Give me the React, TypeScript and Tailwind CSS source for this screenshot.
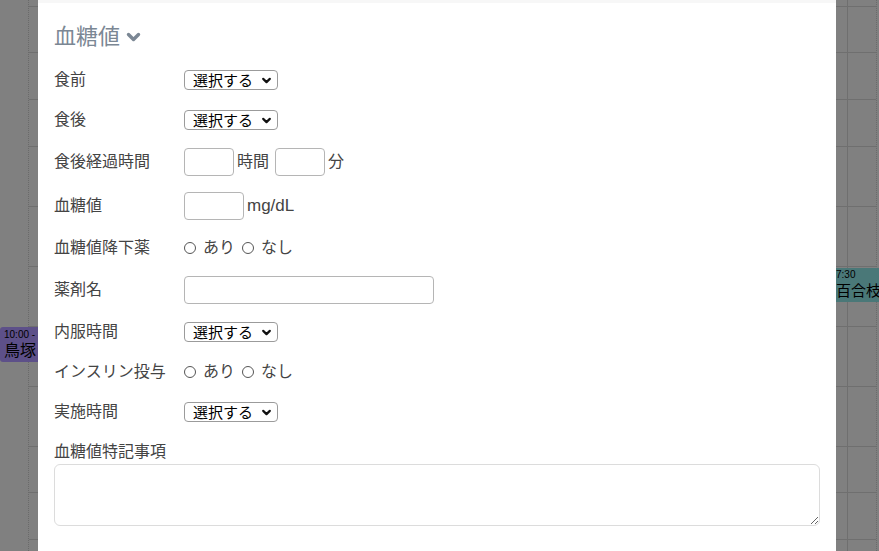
const rowLines = [7, 46, 47, 47, 60, 60, 60, 60, 60, 46, 47];

function SelectBox() {
  return (
    <div className="flex items-center justify-between w-[94px] h-[20px] border border-[#9b9b9b] rounded-[4px] bg-white pl-[8px] pr-[5px] text-[15px] text-black leading-none">
      <span>選択する</span>
      <svg className="w-[11px] h-[11px]" viewBox="0 0 10 10" fill="none" stroke="#111" strokeWidth="2" strokeLinecap="round" strokeLinejoin="round">
        <path d="M2 3.5l3 3 3-3" />
      </svg>
    </div>
  );
}

function Radio({ label }: { label: string }) {
  return (
    <span className="flex items-center">
      <span className="w-[12px] h-[12px] rounded-full border border-[#555] bg-white" />
      <span className="ml-[7px]">{label}</span>
    </span>
  );
}

function Row({ label, h, children }: { label: string; h: string; children: React.ReactNode }) {
  return (
    <div className={`flex items-center ${h}`}>
      <div className="w-[130px] shrink-0 text-[16px] text-[#444]">{label}</div>
      <div className="flex items-center text-[16px] text-[#444]">{children}</div>
    </div>
  );
}

function Field({ w }: { w: string }) {
  return <div className={`${w} h-[28px] border border-[#b5b5b5] rounded-[4px] bg-white`} />;
}

export default function App() {
  return (
    <div
      className="relative w-[879px] h-[551px] overflow-hidden bg-[#808080]"
      style={{ fontFamily: '"Liberation Sans", "Noto Sans CJK JP", sans-serif' }}
    >
      {/* calendar behind the modal */}
      <div className="flex h-full">
        <div className="w-[29px] border-r border-dotted border-[#6a6a6a]" />
        <div className="flex-1 flex flex-col border-r border-[#6f6f6f]">
          {rowLines.map((h, i) => (
            <div key={i} className="border-b border-[#6f6f6f] shrink-0" style={{ height: h }} />
          ))}
        </div>
        <div className="w-[29px] flex flex-col border-r border-dotted border-[#6a6a6a]">
          {rowLines.map((h, i) => (
            <div key={i} className="border-b border-[#6f6f6f] shrink-0" style={{ height: h }} />
          ))}
        </div>
        <div className="w-[2px]" />
      </div>

      {/* events */}
      <div className="absolute left-0 top-[327px] w-[38px] h-[35px] bg-[#5d5089] rounded-l-[3px] text-black pl-[4px] leading-none overflow-hidden">
        <div className="text-[10px] mt-[3px] whitespace-nowrap">10:00 -</div>
        <div className="text-[16px] mt-[3px] whitespace-nowrap">鳥塚</div>
      </div>
      <div className="absolute left-[836px] top-[268px] w-[43px] h-[34px] bg-[#4a7878] text-black leading-none overflow-hidden">
        <div className="text-[10px] mt-[2px] whitespace-nowrap">7:30</div>
        <div className="text-[15px] mt-[3px] whitespace-nowrap">百合枝</div>
      </div>

      {/* modal */}
      <div className="absolute left-[38px] top-0 w-[798px] h-full bg-white">
        <div className="h-[3px] bg-[#f7f7f7]" />
        <div className="px-[16px]">
          <div className="h-[57px] pt-[10px] flex items-center text-[22px] text-[#7b8794]">
            <span>血糖値</span>
            <svg className="ml-[6px] w-[15px] h-[12px]" viewBox="0 0 15 12" fill="none" stroke="currentColor" strokeWidth="3.4" strokeLinecap="round" strokeLinejoin="round">
              <path d="M2.5 3.5l5 5 5-5" />
            </svg>
          </div>
          <Row label="食前" h="h-[40px]">
            <SelectBox />
          </Row>
          <Row label="食後" h="h-[40px]">
            <SelectBox />
          </Row>
          <Row label="食後経過時間" h="h-[44px]">
            <Field w="w-[50px]" />
            <span className="ml-[3px]">時間</span>
            <span className="ml-[6px]" />
            <Field w="w-[50px]" />
            <span className="ml-[3px]">分</span>
          </Row>
          <Row label="血糖値" h="h-[44px]">
            <Field w="w-[60px]" />
            <span className="ml-[3px] text-[17px]">mg/dL</span>
          </Row>
          <Row label="血糖値降下薬" h="h-[40px]">
            <Radio label="あり" />
            <span className="ml-[7px]" />
            <Radio label="なし" />
          </Row>
          <Row label="薬剤名" h="h-[44px]">
            <Field w="w-[250px]" />
          </Row>
          <Row label="内服時間" h="h-[40px]">
            <SelectBox />
          </Row>
          <Row label="インスリン投与" h="h-[40px]">
            <Radio label="あり" />
            <span className="ml-[7px]" />
            <Radio label="なし" />
          </Row>
          <Row label="実施時間" h="h-[40px]">
            <SelectBox />
          </Row>
          <div className="mt-[10px] h-[20px] flex items-center text-[16px] text-[#444]">血糖値特記事項</div>
          <textarea className="mt-[2px] block w-[766px] h-[62px] border border-[#dcdcdc] rounded-[6px] resize-y outline-none" />
        </div>
      </div>
    </div>
  );
}
